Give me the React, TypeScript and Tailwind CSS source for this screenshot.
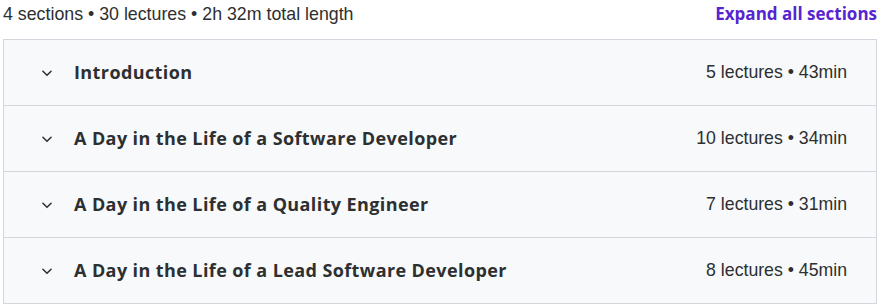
import React from "react";

const sections = [
  { title: "Introduction", meta: "5 lectures • 43min" },
  { title: "A Day in the Life of a Software Developer", meta: "10 lectures • 34min" },
  { title: "A Day in the Life of a Quality Engineer", meta: "7 lectures • 31min" },
  { title: "A Day in the Life of a Lead Software Developer", meta: "8 lectures • 45min" },
];

function Chevron() {
  return (
    <svg width="14" height="14" viewBox="0 0 24 24" fill="none" className="shrink-0">
      <path d="M5 9l7 7 7-7" stroke="#2d2f31" strokeWidth="2.6" strokeLinecap="round" strokeLinejoin="round" />
    </svg>
  );
}

export default function App() {
  return (
    <div className="w-[881px] h-[307px] bg-white pl-[3px] pr-[4px] text-[#2d2f31]" style={{ fontFamily: "'Liberation Sans', Arial, sans-serif" }}>
      <div className="flex items-center justify-between h-[28px]">
        <span className="text-[17.8px] text-[#2d2f31]">4 sections • 30 lectures • 2h 32m total length</span>
        <span className="text-[17px] font-bold text-[#5624d0]" style={{ fontFamily: "'Open Sans', sans-serif" }}>Expand all sections</span>
      </div>
      <div className="mt-[11px] border border-[#d1d7dc]">
        {sections.map((s, i) => (
          <div key={i} className={`flex items-center bg-[#f7f9fa] pl-[36px] pr-[29px] ${i > 0 ? "h-[66px] border-t border-[#d1d7dc]" : "h-[65px]"}`}>
            <Chevron />
            <span className="ml-[20px] text-[18px] font-bold tracking-[0.4px] text-[#2d2f31] flex-1" style={{ fontFamily: "'Open Sans', sans-serif" }}>{s.title}</span>
            <span className="text-[17.7px] text-[#2d2f31]">{s.meta}</span>
          </div>
        ))}
      </div>
    </div>
  );
}
